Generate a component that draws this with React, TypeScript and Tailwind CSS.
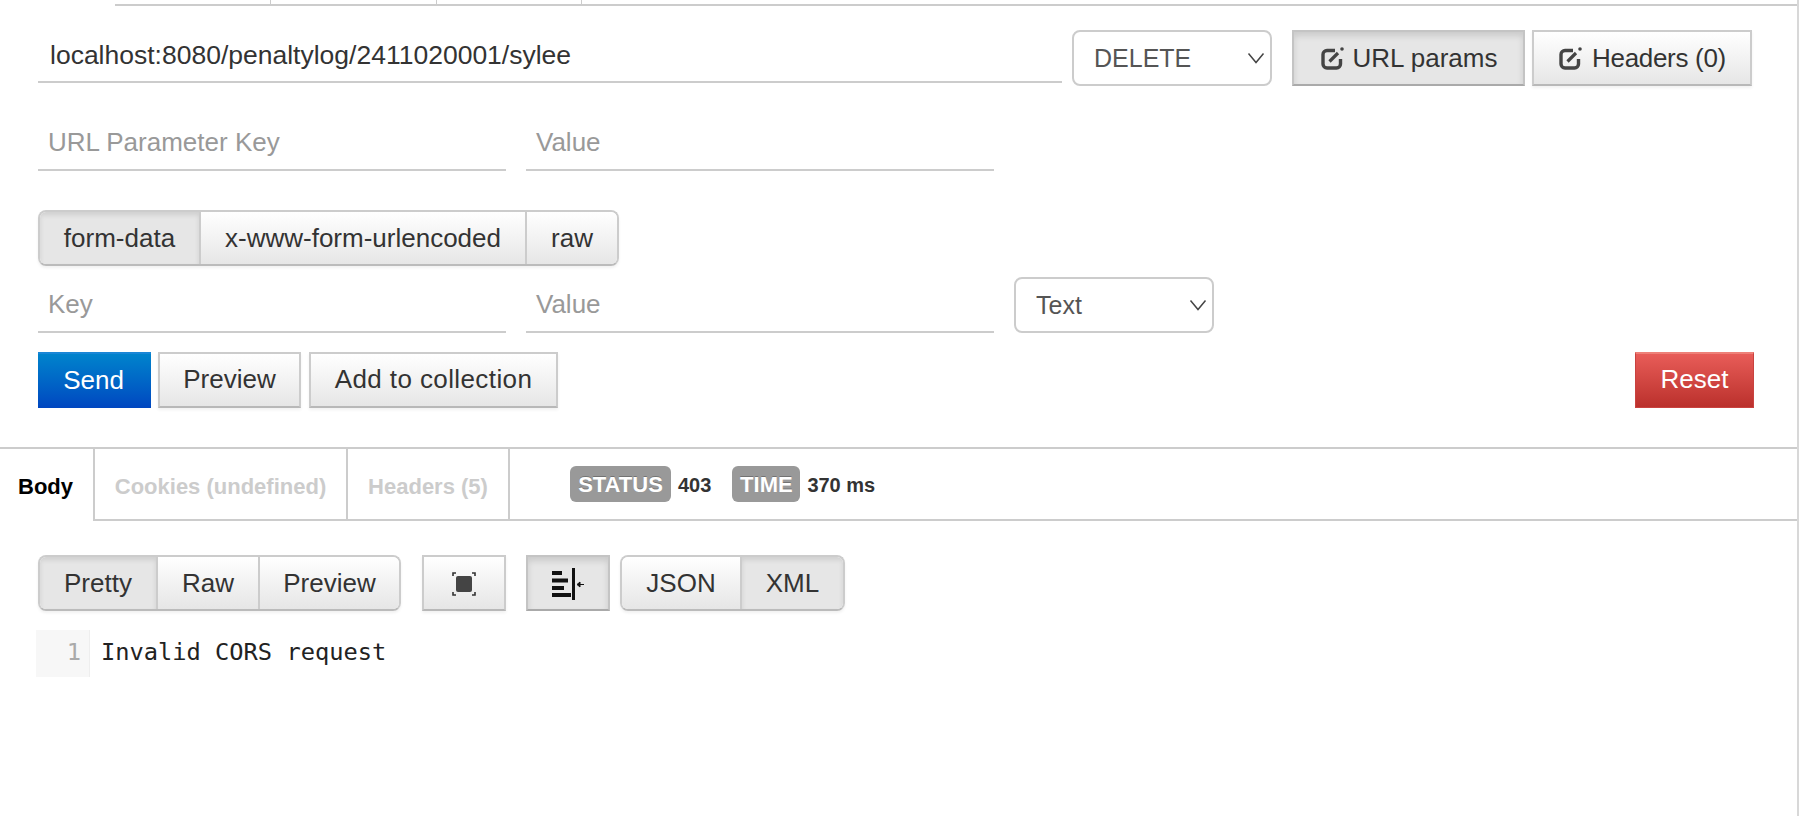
import React from 'react';

const btn =
  'flex items-center justify-center h-[56px] border-2 border-[#ccc] border-b-[#b8b8b8] bg-gradient-to-b from-white to-[#e6e6e6] shadow-[0_2px_3px_rgba(0,0,0,0.06)] text-[26px] text-[#333]';
const btnOn =
  'flex items-center justify-center h-[56px] border-2 border-[#c4c4c4] border-b-[#aaa] bg-[#e6e6e6] shadow-[inset_0_4px_6px_rgba(0,0,0,0.12)] text-[26px] text-[#333]';
const segment = 'flex items-center justify-center h-full text-[26px] text-[#333]';

const Field = ({ label, width }: { label: string; width: string }) => (
  <div className={`${width} h-[56px] border-b-2 border-[#ccc] pl-[10px] pt-[9px] text-[26px] leading-[36px] text-[#999]`}>
    {label}
  </div>
);

const Select = ({ value, className }: { value: string; className: string }) => (
  <div className={`relative w-[200px] h-[56px] ${className}`}>
    <select
      defaultValue={value}
      className="w-full h-full appearance-none rounded-lg border-2 border-[#ccc] bg-white pl-[20px] pt-[2px] text-[25px] text-[#555]"
    >
      <option>{value}</option>
    </select>
    <svg className="absolute right-[7px] top-[22px]" width="18" height="12" viewBox="0 0 18 12" fill="none">
      <path d="M1.5 1.5 9 10.5l7.5-9" stroke="#444" strokeWidth="1.5" />
    </svg>
  </div>
);

const EditIcon = () => (
  <svg width="25" height="25" viewBox="0 0 25 25" fill="none">
    <path d="M15 4.5H7a4 4 0 0 0-4 4V18a4 4 0 0 0 4 4h9.5a4 4 0 0 0 4-4v-5" stroke="#444" strokeWidth="3.4" />
    <path d="M9.5 15.5 18 7" stroke="#444" strokeWidth="3.2" />
    <circle cx="22" cy="3" r="1.8" fill="#444" />
  </svg>
);

const Segmented = ({ items, active, widths, className }: { items: string[]; active: number; widths: string[]; className?: string }) => (
  <div className={`flex h-[56px] rounded-lg border-2 border-[#ccc] border-b-[#bbb] overflow-hidden shadow-[0_2px_3px_rgba(0,0,0,0.06)] ${className ?? ''}`}>
    {items.map((item, i) => (
      <div
        key={item}
        className={`${segment} ${widths[i]} ${i > 0 ? 'border-l-2 border-[#ccc]' : ''} ${
          i === active ? 'bg-[#e6e6e6] shadow-[inset_0_3px_5px_rgba(0,0,0,0.1)]' : 'bg-gradient-to-b from-white to-[#e6e6e6]'
        }`}
      >
        {item}
      </div>
    ))}
  </div>
);

const Badge = ({ label, width }: { label: string; width: string }) => (
  <span className={`${width} h-[36px] flex items-center justify-center rounded-md bg-[#999] text-[22px] font-bold text-white [text-shadow:0_-1px_0_rgba(0,0,0,0.25)]`}>
    {label}
  </span>
);

export default function App() {
  return (
    <div className="w-[1804px] h-[816px] overflow-hidden bg-white font-['Liberation_Sans',sans-serif]">
      <div className="w-[1799px] h-full border-r-2 border-[#d8d8d8]">
        <div className="ml-[115px] h-[6px] flex border-b-2 border-[#ccc]">
          <div className="w-[156px] border-r border-[#ccc]" />
          <div className="w-[166px] border-r border-[#ccc]" />
          <div className="w-[145px] border-r border-[#ccc]" />
        </div>

        {/* request line */}
        <div className="flex items-start mt-[24px] pl-[38px]">
          <div className="w-[1024px] h-[53px] border-b-2 border-[#ccc] pl-[12px] pt-[7px] text-[26.5px] leading-[36px] text-[#333]">
            localhost:8080/penaltylog/2411020001/sylee
          </div>
          <Select value="DELETE" className="ml-[10px]" />
          <div className={`${btnOn} w-[233px] ml-[20px] gap-[8px]`}>
            <EditIcon />
            URL params
          </div>
          <div className={`${btn} w-[220px] ml-[7px] gap-[9px]`}>
            <EditIcon />
            <span className="tracking-[-0.3px]">Headers (0)</span>
          </div>
        </div>

        <div className="flex gap-[20px] mt-[29px] pl-[38px]">
          <Field label="URL Parameter Key" width="w-[468px]" />
          <Field label="Value" width="w-[468px]" />
        </div>

        <Segmented
          className="mt-[39px] ml-[38px] w-fit"
          items={['form-data', 'x-www-form-urlencoded', 'raw']}
          active={0}
          widths={['w-[159px]', 'w-[326px]', 'w-[92px]']}
        />

        <div className="flex mt-[11px] pl-[38px]">
          <Field label="Key" width="w-[468px]" />
          <Field label="Value" width="w-[468px] ml-[20px]" />
          <Select value="Text" className="ml-[20px]" />
        </div>

        <div className="flex mt-[19px] pl-[38px] pr-[43px]">
          <div className="w-[113px] h-[56px] flex items-center justify-center pb-[2px] pr-[2px] border-t-2 border-[#1a86d6] bg-gradient-to-b from-[#0083cc] to-[#0046c0] text-[26px] text-white">
            Send
          </div>
          <div className={`${btn} w-[143px] ml-[7px] pb-[2px]`}>Preview</div>
          <div className={`${btn} w-[249px] ml-[8px] pb-[2px] tracking-[0.4px]`}>Add to collection</div>
          <div className="ml-auto w-[119px] h-[56px] flex items-center justify-center pb-[2px] border border-[#c9423f] border-t-2 border-t-[#ee8078] bg-gradient-to-b from-[#e85c58] to-[#bb302c] text-[26px] text-white">
            Reset
          </div>
        </div>

        {/* response tabs */}
        <div className="flex h-[74px] mt-[39px] border-t-2 border-[#ccc]">
          <div className="w-[93px] flex items-center pl-[18px] pt-[2px] text-[22px] font-bold text-black">Body</div>
          <div className="flex-1 flex items-center border-b-2 border-l-2 border-[#ccc] text-[22px] font-bold">
            <div className="w-[253px] h-full flex items-center justify-center pt-[4px] border-r-2 border-[#ccc] text-[#ccc]">
              Cookies (undefined)
            </div>
            <div className="w-[162px] h-full flex items-center justify-center pt-[4px] border-r-2 border-[#ccc] text-[#ccc]">
              Headers (5)
            </div>
            <div className="flex items-center ml-[60px] text-[#333] text-[20px]">
              <Badge label="STATUS" width="w-[101px]" />
              <span className="ml-[7px] pt-[2px]">403</span>
              <span className="ml-[21px]"><Badge label="TIME" width="w-[68px]" /></span>
              <span className="ml-[7px] pt-[2px]">370 ms</span>
            </div>
          </div>
        </div>

        {/* response view controls */}
        <div className="flex mt-[34px] pl-[38px]">
          <Segmented
            items={['Pretty', 'Raw', 'Preview']}
            active={0}
            widths={['w-[116px]', 'w-[102px]', 'w-[141px]']}
          />
          <div className={`${btn} w-[84px] ml-[21px]`}>
            <svg className="mt-[2px]" width="24" height="24" viewBox="0 0 24 24">
              <rect x="4" y="4" width="16" height="16" rx="2" fill="#444" />
              <path d="M1 4V1h3M20 1h3v3M23 20v3h-3M4 23H1v-3" fill="none" stroke="#333" strokeWidth="1.6" />
            </svg>
          </div>
          <div className={`${btnOn} w-[84px] ml-[20px]`}>
            <svg className="mt-[2px]" width="32" height="32" viewBox="0 0 32 32">
              <path d="M0 3h10v4H0zM0 10.5h16v4H0zM0 18h12v4H0zM0 25h19v4H0z" fill="#111" />
              <path d="M20 0h3v32h-3z" fill="#111" />
              <path d="M26 16.500h6M25 16.500l3-2.500v5z" fill="#111" stroke="#111" strokeWidth="1" />
            </svg>
          </div>
          <Segmented
            className="ml-[10px]"
            items={['JSON', 'XML']}
            active={1}
            widths={['w-[118px]', 'w-[103px]']}
          />
        </div>

        {/* editor */}
        <div className="flex mt-[19px] ml-[36px] h-[47px] font-['DejaVu_Sans_Mono',monospace] text-[23.7px]">
          <div className="w-[54px] bg-[#f7f7f7] border-r border-[#eee] pr-[8px] text-right leading-[45px] text-[#aaa]">1</div>
          <div className="pl-[11px] leading-[45px] text-[#222]">Invalid CORS request</div>
        </div>
      </div>
    </div>
  );
}
